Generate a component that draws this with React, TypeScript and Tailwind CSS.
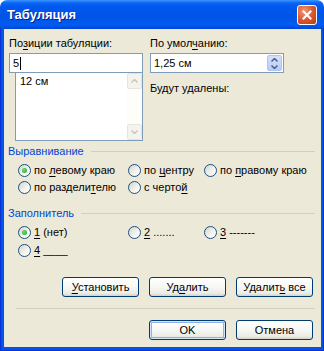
import React from "react";

const U = ({ children }: { children: React.ReactNode }) => (
  <span className="underline underline-offset-[2px]">{children}</span>
);

const Radio = ({ checked = false }: { checked?: boolean }) => (
  <span className="relative w-[13px] h-[13px] shrink-0 rounded-full border border-[#1C5180] bg-[linear-gradient(135deg,#D4D4CC_0%,#F4F4F0_60%,#FFFFFF_100%)]">
    {checked && (
      <span className="absolute left-[3px] top-[3px] w-[5px] h-[5px] rounded-full bg-[radial-gradient(circle_at_40%_40%,#6BE06A,#21A121)]" />
    )}
  </span>
);

const Option = ({ checked, children }: { checked?: boolean; children: React.ReactNode }) => (
  <div className="flex items-center gap-[3px] whitespace-nowrap">
    <Radio checked={checked} />
    <span>{children}</span>
  </div>
);

const XpButton = ({ children, primary }: { children: React.ReactNode; primary?: boolean }) => (
  <button
    className={`w-[77px] h-[20px] rounded-[3px] border border-[#003C74] bg-[linear-gradient(180deg,#FFFFFF_0%,#F7F7F3_50%,#ECEBE6_85%,#D6D0C5_100%)] text-black text-[11px] leading-[13px] ${
      primary ? "shadow-[inset_0_0_0_1px_#CEE7FF,inset_0_0_0_2px_#8EB0EC]" : ""
    }`}
  >
    {children}
  </button>
);

const Chevron = ({ up, color }: { up?: boolean; color: string }) => (
  <svg width="7" height="4" viewBox="0 0 7 4">
    <path
      d={up ? "M0.5 3.5 L3.5 0.5 L6.5 3.5" : "M0.5 0.5 L3.5 3.5 L6.5 0.5"}
      fill="none"
      stroke={color}
      strokeWidth="1.5"
    />
  </svg>
);

const GroupLabel = ({ children }: { children: React.ReactNode }) => (
  <div className="flex items-center gap-[7px] ml-[4px] mr-[6px] h-[13px]">
    <span className="text-[#0046D5]">{children}</span>
    <div className="flex-1 h-px bg-[#D0D0BF]" />
  </div>
);

export default function App() {
  return (
    <div className="w-[324px] h-[351px] bg-white font-['Liberation_Sans',Arial,sans-serif] text-[11px] leading-[13px] text-black">
      {/* Title bar */}
      <div className="h-[29px] rounded-t-[7px] bg-[linear-gradient(180deg,#3D95FF_0%,#0A66F4_10%,#0058EE_22%,#0054E6_60%,#005CF2_85%,#0046D2_100%)] flex items-center justify-between pl-[7px] pr-[7px]">
        <span className="text-white font-bold text-[13px] [text-shadow:1px_1px_0_#0A1E8A]">Табуляция</span>
        <div className="w-[20px] h-[20px] rounded-[3px] border border-white bg-[radial-gradient(circle_at_35%_30%,#F29A78,#D9532E_55%,#C1380F)] flex items-center justify-center">
          <svg width="10" height="10" viewBox="0 0 10 10">
            <path d="M1.5 1.5 L8.5 8.5 M8.5 1.5 L1.5 8.5" stroke="white" strokeWidth="2" strokeLinecap="square" />
          </svg>
        </div>
      </div>

      {/* Frame + client */}
      <div className="h-[322px] bg-[#0055E5] border-x border-b border-[#0831D9] pl-[3px] pr-[2px] pb-[3px]">
        <div className="h-full bg-[#ECE9D8] pt-[8px] flex flex-col">
          {/* Top section */}
          <div className="flex gap-[7px] ml-[5px]">
            <div className="w-[134px] flex flex-col">
              <div>
                По<U>з</U>иции табуляции:
              </div>
              <div className="mt-[3px] h-[20px] border border-[#7F9DB9] bg-white flex items-center px-[3px]">
                5<span className="ml-px w-px h-[13px] bg-black" />
              </div>
              <div className="ml-[6px] h-[68px] border border-[#7F9DB9] border-t-0 bg-white flex">
                <div className="flex-1 pl-[4px] pt-[2px]">12 см</div>
                <div className="w-[15px] bg-[#FDFDFA] flex flex-col justify-between">
                  <div className="h-[16px] rounded-[2px] border border-[#E6E4DC] bg-[#F4F3EE] flex items-center justify-center">
                    <Chevron up color="#C9C7BA" />
                  </div>
                  <div className="h-[16px] rounded-[2px] border border-[#E6E4DC] bg-[#F4F3EE] flex items-center justify-center">
                    <Chevron color="#C9C7BA" />
                  </div>
                </div>
              </div>
            </div>
            <div className="w-[134px] flex flex-col">
              <div>
                По умол<U>ч</U>анию:
              </div>
              <div className="mt-[3px] h-[20px] border border-[#7F9DB9] bg-white flex items-center pl-[3px] pr-px">
                <span className="flex-1">1,25 см</span>
                <div className="w-[15px] h-[16px] rounded-[2px] bg-[linear-gradient(180deg,#D5E1FB,#B9CCF7)] border border-[#B1C4F2] flex flex-col items-center justify-center gap-[3px]">
                  <Chevron up color="#4D6185" />
                  <Chevron color="#4D6185" />
                </div>
              </div>
              <div className="mt-[9px]">Будут удалены:</div>
            </div>
          </div>

          {/* Alignment */}
          <div className="mt-[4px]">
            <GroupLabel>Выравнивание</GroupLabel>
            <div className="mt-[4px] ml-[14px] grid grid-cols-[110px_76px_1fr]">
              <div className="h-[17px] flex items-center">
                <Option checked>
                  по <U>л</U>евому краю
                </Option>
              </div>
              <div className="h-[17px] flex items-center">
                <Option>
                  по <U>ц</U>ентру
                </Option>
              </div>
              <div className="h-[17px] flex items-center">
                <Option>
                  по <U>п</U>равому краю
                </Option>
              </div>
              <div className="h-[17px] flex items-center">
                <Option>
                  по раздели<U>т</U>елю
                </Option>
              </div>
              <div className="h-[17px] flex items-center">
                <Option>
                  с черто<U>й</U>
                </Option>
              </div>
            </div>
          </div>

          {/* Leader */}
          <div className="mt-[11px]">
            <GroupLabel>Заполнитель</GroupLabel>
            <div className="mt-[3px] ml-[14px] grid grid-cols-[110px_76px_1fr]">
              <div className="h-[18px] flex items-center">
                <Option checked>
                  <U>1</U> (нет)
                </Option>
              </div>
              <div className="h-[18px] flex items-center">
                <Option>
                  <U>2</U> .......
                </Option>
              </div>
              <div className="h-[18px] flex items-center">
                <Option>
                  <U>3</U> -------
                </Option>
              </div>
              <div className="h-[18px] flex items-center">
                <Option>
                  <U>4</U> ____
                </Option>
              </div>
            </div>
          </div>

          {/* Action buttons */}
          <div className="mt-[18px] mr-[8px] flex justify-end gap-[10px]">
            <XpButton>
              <U>У</U>становить
            </XpButton>
            <XpButton>
              Уд<U>а</U>лить
            </XpButton>
            <XpButton>
              Удалит<U>ь</U> все
            </XpButton>
          </div>

          <div className="mt-[11px] ml-[12px] mr-[6px] h-px bg-[#D0D0BF]" />

          <div className="mt-[11px] mr-[8px] flex justify-end gap-[10px]">
            <XpButton primary>OK</XpButton>
            <XpButton>Отмена</XpButton>
          </div>
        </div>
      </div>
    </div>
  );
}
